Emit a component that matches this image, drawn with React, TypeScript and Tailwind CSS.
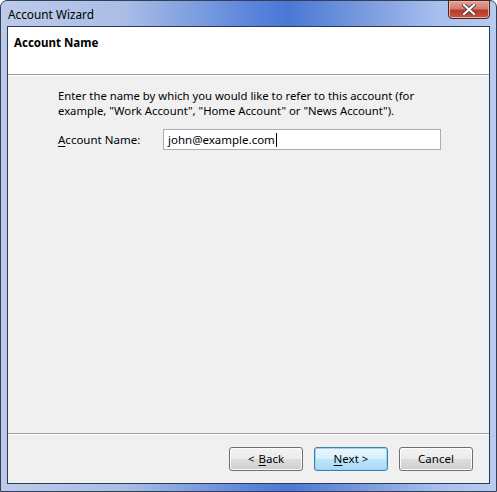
import React from "react";

const font = { fontFamily: '"Noto Sans", "Open Sans", sans-serif' };

function Btn({ children, primary }: { children: React.ReactNode; primary?: boolean }) {
  return (
    <div
      className={
        "w-[74px] h-[24px] rounded-[3px] border flex items-center justify-center text-[11.5px] text-black " +
        (primary
          ? "border-[#3c7fb1] bg-[linear-gradient(#eaf6fd_0%,#d9f0fc_50%,#bee6fd_50%,#a7d9f5_100%)] shadow-[inset_0_0_0_1px_#9ad4f1]"
          : "border-[#707070] bg-[linear-gradient(#f2f2f2_0%,#ebebeb_50%,#dddddd_50%,#cfcfcf_100%)] shadow-[inset_0_0_0_1px_#fcfcfc]")
      }
    >
      {children}
    </div>
  );
}

export default function App() {
  return (
    <div style={font} className="w-[497px] h-[492px] relative overflow-hidden">
      <div className="absolute inset-0 rounded-t-[7px] border border-[#343e56] bg-[linear-gradient(to_right,#bccbea_0%,#a9bde6_25%,#5c86db_50%,#4a78d6_58%,#7e9edf_75%,#a6bfee_88%,#b9cbef_100%)] flex flex-col">
        <div className="h-[25px] flex items-start relative shrink-0">
          <div className="pl-[7px] pt-[5px] text-[11.8px] leading-[16px] text-black">Account Wizard</div>
          <div className="absolute right-[6px] top-[-1px] w-[42px] h-[19px] rounded-b-[4px] border border-[#4a2321] bg-[linear-gradient(#e4a49a_0%,#d47b6e_45%,#b8382a_55%,#c7543f_100%)] shadow-[inset_0_0_0_1px_#eab2a9] flex items-center justify-center">
            <svg width="14" height="11" viewBox="0 0 14 11">
              <path d="M2 1 L12 10 M12 1 L2 10" stroke="#4b3a3a" strokeWidth="4" strokeLinecap="square" />
              <path d="M2 1 L12 10 M12 1 L2 10" stroke="#ffffff" strokeWidth="2.2" strokeLinecap="square" />
            </svg>
          </div>
        </div>
        <div className="mx-[6px] mb-[7px] flex-1 border border-[#2c3a56] bg-[#f0f0f0] flex flex-col">
          <div className="h-[48px] bg-white border-b border-[#a0a0a0] shrink-0 pl-[6px] pt-[8px]">
            <div className="text-[11.5px] leading-[16px] font-bold text-black">Account Name</div>
          </div>
          <div className="h-px bg-white shrink-0" />
          <div className="flex-1 pl-[50px] pt-[12px]">
            <p className="text-[11.3px] leading-[15px] text-black w-[380px]">
              Enter the name by which you would like to refer to this account (for example, "Work Account", "Home Account" or "News Account").
            </p>
            <div className="flex items-center mt-[11px]">
              <div className="w-[105px] text-[11.5px] text-black">
                <span className="underline underline-offset-2">A</span>ccount Name:
              </div>
              <div className="w-[278px] h-[21px] border border-[#abadb3] bg-white flex items-center pl-[4px] text-[11.5px] text-black">
                john@example.com<span className="inline-block w-px h-[14px] bg-black ml-px" />
              </div>
            </div>
          </div>
          <div className="h-px bg-[#a0a0a0] shrink-0" />
          <div className="h-px bg-white shrink-0" />
          <div className="h-[48px] shrink-0 flex items-start justify-end pt-[12px] pr-[16px] gap-[11px]">
            <Btn>
              &lt; <span className="underline underline-offset-2 ml-1">B</span>ack
            </Btn>
            <Btn primary>
              <span className="underline underline-offset-2">N</span>ext &gt;
            </Btn>
            <Btn>Cancel</Btn>
          </div>
        </div>
      </div>
    </div>
  );
}
